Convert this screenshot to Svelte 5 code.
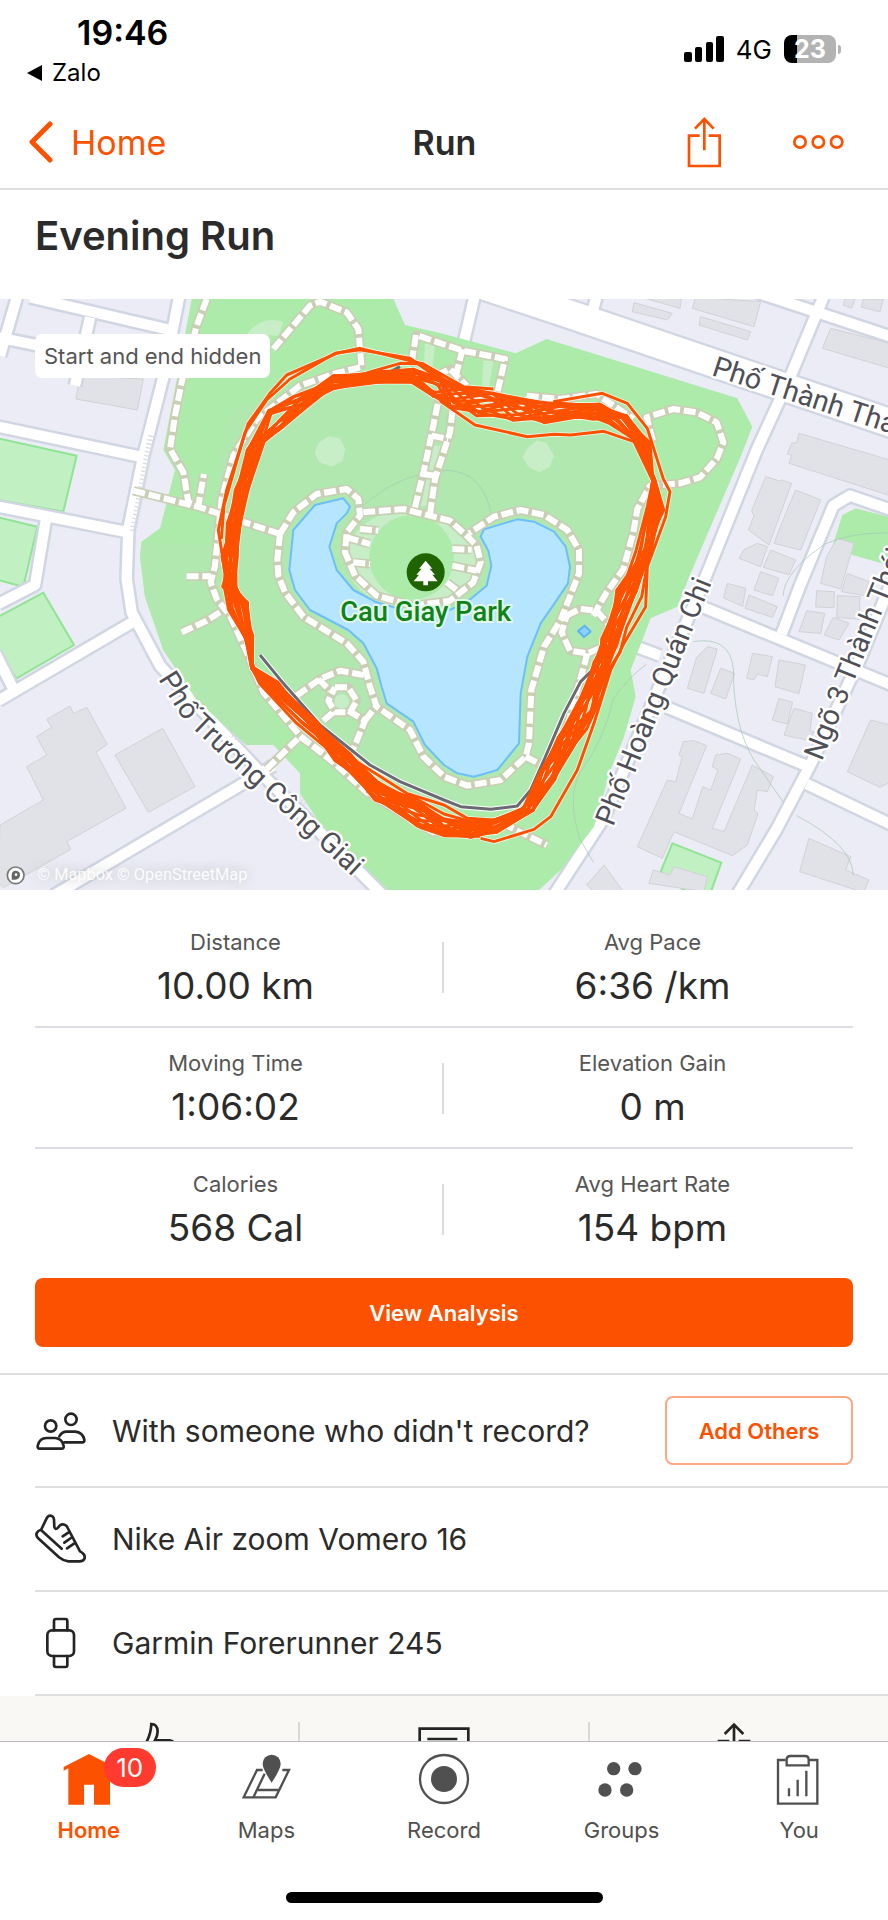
<script lang="ts">
  type Point = [number, number]

  const stats = [
    [
      { label: 'Distance', value: '10.00 km' },
      { label: 'Avg Pace', value: '6:36 /km' },
    ],
    [
      { label: 'Moving Time', value: '1:06:02' },
      { label: 'Elevation Gain', value: '0 m' },
    ],
    [
      { label: 'Calories', value: '568 Cal' },
      { label: 'Avg Heart Rate', value: '154 bpm' },
    ],
  ]

  const park =
    '575,0 1180,0 1215,78 1332,105 1547,163 1640,120 2212,298 2257,383 2222,473 2072,823 2032,923 1952,958 1927,1023 1892,1113 1907,1193 1872,1313 1832,1413 1782,1583 1682,1713 1612,1778 1170,1778 960,1573 900,1483 900,1423 820,1338 740,1338 590,1203 490,1053 435,893 420,773 425,728 480,688 525,513 490,453 530,243'

  const lake =
    '1030,598 1050,623 1040,643 1010,673 988,743 1010,813 1060,873 1130,910 1250,945 1340,937 1400,910 1460,860 1474,800 1465,755 1442,713 1452,691 1552,661 1602,668 1662,698 1697,743 1710,803 1704,853 1667,908 1622,973 1582,1073 1562,1183 1557,1333 1492,1413 1422,1433 1372,1423 1332,1398 1275,1338 1240,1268 1160,1213 1145,1163 1130,1108 1090,1033 1045,993 930,933 885,873 868,813 880,693 945,618'

  const pitches = [
    '-5,418 230,470 190,638 -5,603',
    '-5,655 112,683 70,863 -5,843',
    '-5,953 130,881 222,1038 50,1138 -5,1063',
    '2017,1633 2164,1691 2132,1780 2060,1780 1982,1718',
  ]

  const buildings = [
    '240,230 430,240 412,333 228,300',
    '507,773 547,773 547,880 507,880',
    '0,1578 130,1503 80,1403 140,1368 110,1313 155,1285 140,1261 210,1221 220,1243 260,1225 322,1336 288,1360 378,1528 200,1628 212,1651 10,1766 -5,1750',
    '345,1368 488,1288 585,1463 445,1540',
    '1902,11 2017,43 2002,63 1897,38',
    '1942,0 2045,-5 2040,28',
    '2087,-5 2282,8 2262,83 2077,28',
    '2102,53 2252,98 2242,123 2097,78',
    '2535,0 2567,-5 2555,28 2530,18',
    '2590,0 2650,0 2640,38 2584,24',
    '2492,88 2670,133 2670,208 2467,148',
    '2397,403 2670,483 2670,590 2367,493 2375,468 2362,465 2375,433 2390,430',
    '2297,533 2340,546 2345,543 2375,553 2307,738 2245,693 2262,650 2255,635',
    '2387,573 2462,603 2402,753 2322,733 2342,680',
    '2272,733 2302,743 2282,803 2217,778 2232,752',
    '2312,753 2387,783 2367,827 2290,805',
    '2282,818 2337,838 2317,890 2262,873',
    '2182,853 2237,868 2228,922 2170,896',
    '2512,718 2562,733 2522,870 2462,853 2480,772',
    '2542,823 2607,848 2595,890 2525,878',
    '2450,875 2503,878 2502,926 2447,924',
    '2112,1053 2122,1043 2152,1050 2112,1183 2062,1168 2090,1075',
    '2162,1108 2204,1123 2177,1200 2132,1183',
    '2258,1063 2317,1073 2302,1133 2272,1125 2262,1142 2240,1138',
    '2337,1083 2416,1098 2397,1184 2325,1163',
    '2337,1198 2378,1210 2362,1275 2317,1263',
    '2382,1228 2437,1243 2430,1295 2442,1298 2427,1325 2352,1308',
    '2247,888 2332,923 2317,955 2235,928',
    '2420,935 2474,943 2462,1003 2397,998',
    '2500,955 2547,973 2517,1023 2472,1008',
    '2512,890 2580,893 2577,961 2510,955',
    '2050,1328 2082,1325 2120,1340 2037,1543 2077,1560 2108,1463 2132,1473 2154,1413 2137,1403 2147,1368 2182,1363 2222,1380 2137,1588 2172,1598 2257,1398 2320,1433 2302,1478 2272,1473 2262,1533 2274,1543 2242,1638 2197,1670 2022,1598 1987,1678 1912,1643 2002,1443 2027,1448 2047,1373 2037,1368',
    '1960,1713 2010,1728 2022,1703 2122,1733 2112,1778 1947,1753',
    '2612,1263 2670,1278 2670,1450 2640,1465 2542,1418',
    '2427,1618 2552,1673 2537,1713 2607,1743 2590,1780 2399,1718',
    '1812,1698 1872,1780 1785,1780 1760,1758',
  ]

  const roads = [
    'M90,-5 L520,95',
    'M55,-20 L0,170',
    'M-5,115 L240,165',
    'M540,-20 L490,235 L430,470 L385,690 L380,840 L395,940 L480,1100 L790,1430 L1150,1790',
    'M270,55 L225,260',
    'M-5,383 L430,475',
    'M-5,623 L385,700',
    'M138,660 L105,858 L-5,915',
    'M400,968 L-5,1205',
    'M-15,1060 L40,1170',
    'M160,1790 L820,1400',
    'M2270,-20 L2680,115',
    'M2480,-30 L2370,235 L2270,453 L2110,850 L1810,1560 L1660,1790',
    'M2110,925 L2680,1160',
    'M2000,1225 L2430,1405',
    'M2420,1455 L2680,1580',
    'M2680,635 L2550,590 L2500,620 L2400,860 L2345,1005',
    'M2210,1790 L2330,1590 L2430,1400 L2580,1080 L2670,860',
    'M1424,-10 L1388,145',
    'M1790,-10 L1775,50',
    'M1860,1025 L1980,1070',
  ]

  const paths = [
    'M620,0 L590,80 L545,250 L525,350 L510,450 L550,520 L565,610 L595,620 L612,525',
    'M400,575 L600,625 L840,705',
    'M820,150 L930,20 L960,8 L1040,40 L1075,90 L1085,210',
    'M840,705 L832,780 L835,830 L855,880 L910,953 L1040,1033 L1090,1088 L1110,1163 L1130,1223 L1230,1293 L1270,1373 L1332,1433 L1402,1460 L1502,1443 L1577,1373 L1587,1333 L1594,1173 L1632,1043 L1682,963 L1715,880 L1737,823 L1737,753 L1702,693 L1632,648 L1562,633 L1482,653 L1407,703',
    'M840,705 L880,640 L950,585 L1040,570 L1075,600 L1080,650 L1040,700 L1035,760 L1065,830 L1130,890 L1240,920 L1350,905 L1420,850 L1442,790 L1430,740 L1400,710 L1350,665 L1210,630 L1090,640',
    'M1080,690 L1135,695 M1040,715 L1110,735 M1060,790 L1110,795 M1357,750 L1415,752 M1357,800 L1430,815 M1340,850 L1380,880',
    'M1080,205 L1000,225 L900,260 L770,360 L700,470 L665,600 L645,800 L632,850 L650,900 L690,950 L740,1060 L790,1180 L900,1310 L1000,1390 L1100,1480 L1300,1600 L1500,1570 L1640,1638',
    'M1780,950 L1820,880 L1870,810 L1900,700 L1912,630 L1950,560 L2040,553 L2100,535 L2150,480 L2170,430 L2150,370 L2090,340 L2020,330 L1940,355 L1960,430',
    'M1580,290 L1680,300 L1790,285 L1900,360',
    'M1700,950 L1740,930 L1790,935 L1825,975 L1820,1040 L1762,1063 L1710,1055 L1685,1000 L1700,950',
    'M1762,1063 L1705,1270 L1665,1370 L1602,1490',
    'M1577,1373 L1625,1398',
    'M890,1190 L960,1140 L1020,1115 L1100,1130 M955,1140 L990,1175 M970,1265 L1005,1235 M1045,1235 L1095,1265 L1060,1350 M1095,1265 L1130,1220',
    'M1005,1165 L1045,1165 L1070,1205 L1050,1240 L1005,1240 L985,1205 L1005,1165',
    'M545,1000 L620,965 L690,920 M560,832 L632,832',
    'M800,1410 L900,1313 L1000,1383',
    'M1245,625 L1275,500 L1310,330 L1330,230 M1290,645 L1305,540 L1350,400 L1370,220 L1388,150 M1270,525 L1305,530 M1295,410 L1345,420',
    'M1235,190 L1248,108 L1388,155 L1515,180 L1490,290 M1310,230 L1350,210 L1400,260',
  ]

  // Outer and inner edge of the band the laps run in, clockwise from the north
  const band: [Point, Point][] = [
    [[1140, 217], [1140, 250]],
    [[1000, 230], [1000, 270]],
    [[880, 287], [905, 342]],
    [[805, 335], [850, 382]],
    [[742, 453], [793, 427]],
    [[706, 573], [744, 573]],
    [[682, 673], [722, 673]],
    [[666, 773], [712, 773]],
    [[668, 863], [708, 863]],
    [[685, 933], [742, 910]],
    [[736, 1018], [762, 1008]],
    [[755, 1108], [792, 1083]],
    [[780, 1155], [838, 1148]],
    [[880, 1270], [950, 1268]],
    [[1005, 1385], [1050, 1365]],
    [[1125, 1503], [1135, 1450]],
    [[1250, 1580], [1270, 1520]],
    [[1332, 1608], [1332, 1560]],
    [[1412, 1615], [1412, 1568]],
    [[1490, 1600], [1480, 1563]],
    [[1612, 1535], [1555, 1528]],
    [[1665, 1440], [1620, 1420]],
    [[1722, 1340], [1675, 1315]],
    [[1778, 1240], [1730, 1215]],
    [[1825, 1100], [1782, 1090]],
    [[1850, 1040], [1805, 1020]],
    [[1910, 873], [1850, 873]],
    [[1950, 773], [1903, 753]],
    [[1993, 633], [1942, 623]],
    [[1998, 543], [1958, 543]],
    [[1962, 433], [1905, 423]],
    [[1880, 350], [1825, 372]],
    [[1800, 315], [1780, 362]],
    [[1682, 313], [1632, 372]],
    [[1572, 300], [1540, 364]],
    [[1480, 282], [1430, 350]],
    [[1390, 265], [1350, 325]],
    [[1325, 240], [1300, 292]],
    [[1240, 207], [1235, 254]],
  ]

  const lapPoints = (lap: number) =>
    band
      .map(([outer, inner], i) => {
        const t = 0.5 + 0.5 * Math.sin(lap * 2.4 + i * (0.5 + (lap % 5) * 0.35))
        return `${Math.round(outer[0] + (inner[0] - outer[0]) * t)},${Math.round(outer[1] + (inner[1] - outer[1]) * t)}`
      })
      .join(' ')

  const laps = Array.from({ length: 15 }, (_, i) => 'M' + lapPoints(i) + 'Z')

  const strays = [
    'M1400,275 L1330,240 L1270,195 L1080,148 L1010,163 L860,228 L810,283 L745,373 L680,573 L655,693 L675,820',
    'M1460,295 L1332,250 L1230,178 L1080,152 L1005,163 L870,240 L800,303 L735,400 L672,620 L664,720',
    'M1480,270 L1390,263 L1270,195 L1200,193 L1100,222',
    'M1320,305 L1425,378 L1582,413 L1662,406 L1712,408 L1812,397 L1902,428 L1958,545 L1948,640 L1936,780',
    'M1660,308 L1807,283 L1882,313 L1942,388 L1990,540 L2010,578 L1997,653 L1942,803 L1937,923 L1872,1033 L1832,1113 L1782,1273 L1732,1413 L1652,1553 L1602,1591 L1482,1628 L1442,1618',
    'M1945,780 L1925,893 L1880,985 L1860,1060 L1825,1115 L1805,1190 L1760,1290 L1720,1340',
    'M1030,1363 L1110,1413 L1220,1483 L1332,1518 L1402,1558 L1482,1563',
    'M1030,1365 L1120,1460 L1250,1500 L1332,1545 L1420,1570',
    'M1100,1475 L1180,1530 L1260,1585 L1332,1610 L1440,1612',
  ]

  const hidden =
    'M780,1068 L850,1153 L960,1278 L1110,1398 L1200,1448 L1332,1503 L1382,1523 L1472,1531 L1552,1521 L1592,1473 L1632,1383 L1692,1243 L1742,1148 L1792,1098'
</script>

<div class="app">
  <header>
    <div class="status">
      <div class="status-left">
        <span class="time">19:46</span>
        <a class="return" href="#zalo">
          <svg viewBox="0 0 16 16" aria-hidden="true"><path d="M0 8 15 0v16z" /></svg>
          Zalo
        </a>
      </div>
      <div class="status-right">
        <svg class="signal" viewBox="0 0 40 26" aria-hidden="true">
          <rect x="0" y="16" width="8" height="10" rx="2" />
          <rect x="11" y="11" width="7" height="15" rx="2" />
          <rect x="22" y="6" width="7" height="20" rx="2" />
          <rect x="32" y="0" width="8" height="26" rx="2" />
        </svg>
        <span class="network">4G</span>
        <span class="battery">23</span>
      </div>
    </div>
    <nav class="topbar">
      <a class="back" href="#home">
        <svg viewBox="0 0 24 42" aria-hidden="true"><path d="M21 3 3 21l18 18" /></svg>
        Home
      </a>
      <span class="title">Run</span>
      <div class="actions">
        <button aria-label="Share">
          <svg class="share" viewBox="0 0 105 156">
            <path d="M38 59H6v91h92V59H65M52 103V9M24 38 52 9l28 29" />
          </svg>
        </button>
        <button aria-label="More">
          <svg class="more" viewBox="0 0 156 48">
            <circle cx="24" cy="24" r="17" />
            <circle cx="79" cy="24" r="17" />
            <circle cx="134" cy="24" r="17" />
          </svg>
        </button>
      </div>
    </nav>
  </header>

  <main>
    <h1>Evening Run</h1>

    <div class="map">
      <svg viewBox="0 0 2664 1773" role="img" aria-label="Route map">
        <rect class="land" width="2664" height="1773" />
        {#each pitches as points}
          <polygon class="pitch" {points} />
        {/each}
        <polygon class="park" points="2527,648 2567,628 2670,655 2670,800 2557,768 2497,743" />
        {#each buildings as points}
          <polygon class="building" {points} />
        {/each}

        <path class="main-casing" d="M1300,-90 L1700,43 L2290,243 L2680,375" />
        {#each roads as d}
          <path class="road-casing" {d} />
        {/each}
        <path class="main-road" d="M1300,-90 L1700,43 L2290,243 L2680,375" />
        {#each roads as d}
          <path class="road" {d} />
        {/each}
        <path class="steps" d="M455,410 L400,700" />
        <path class="steps" d="M700,1305 L745,1340 M900,1490 L925,1515" />

        <polygon class="park" points={park} />
        <polygon class="meadow" points="620,690 690,330 1000,250 1290,280 1400,360 1880,390 1930,560 1850,880 1600,1480 1350,1540 1100,1420 780,1080 680,850" />
        <polygon class="meadow" points="420,773 425,728 640,740 640,880 780,1130 820,1338 740,1338 590,1203 490,1053 435,893" />
        <polygon class="clearing" points="955,433 985,412 1020,418 1036,450 1028,485 995,503 958,490 944,462" />
        <polygon class="clearing" points="1580,450 1610,424 1640,432 1662,470 1648,505 1618,520 1586,505 1568,475" />
        <path class="clearing" d="M740,105 Q790,45 850,70 L835,110Z" />
        <path class="clearing" d="M1275,135 h30 l-10,90 h-25z M1450,185 h30 l-12,75 h-22z M1300,440 h30 l-35,180 h-32z" />
        <path class="trail" d="M1090,620 Q1200,520 1345,514 Q1450,520 1475,650" />
        <path class="trail" d="M1780,1690 L1740,1620 Q1700,1500 1740,1420 Q1810,1330 1840,1200 Q1880,1140 1940,1095" />
        <path class="trail" d="M2080,1028 Q2190,1010 2200,1110 Q2200,1280 2260,1380 L2350,1510 M2390,1550 Q2560,1640 2560,1730" />
        <path class="trail" d="M2475,735 Q2350,820 2350,890 M2475,735 Q2550,700 2664,702" />
        <ellipse class="terrace" cx="1238" cy="780" rx="200" ry="150" />
        <circle class="stage" cx="1235" cy="775" r="127" />
        <polygon class="lake" points={lake} />

        {#each paths as d}
          <path class="path-casing" {d} />
        {/each}
        {#each paths as d}
          <path class="path" {d} />
        {/each}
        <circle class="clearing" cx="1025" cy="1208" r="22" />
        <path class="pond" d="M1754,980 l18,18 -20,16 -18,-18z" />

        <text class="street" transform="translate(2132 228) rotate(18)">Phố Thành Thái</text>
        <text class="street" transform="translate(1839 1585) rotate(-68)">Phố Hoàng Quán Chi</text>
        <text class="street" transform="translate(2465 1388) rotate(-68)">Ngõ 3 Thành Thái</text>
        <path id="street-curve" d="M474,1140 L550,1262 L700,1405 L840,1532 L1120,1790" fill="none" />
        <text class="street"><textPath href="#street-curve">Phố Trương Công Giai</textPath></text>

        <path class="hidden-casing" d={hidden} />
        {#each laps as d}
          <path class="lap-casing" {d} />
        {/each}
        {#each strays as d}
          <path class="lap-casing" {d} />
        {/each}
        <path class="hidden" d={hidden} />
        <path class="hidden" d="M840,365 L895,318 M1165,222 L1200,203" />
        {#each laps as d}
          <path class="lap" {d} />
        {/each}
        {#each strays as d}
          <path class="lap" {d} />
        {/each}

        <circle class="marker" cx="1277" cy="820" r="57" />
        <path class="tree" d="M1277,785 l20,24 h-8 l16,18 h-8 l16,20 h-29 v12 h-14 v-12 h-29 l16,-20 h-8 l16,-18 h-8z" />
        <text class="place" x="1277" y="966">Cau Giay Park</text>

        <circle class="logo-ring" cx="47" cy="1729" r="25" />
        <path class="logo" d="M35,1742 v-14 q0,-13 13,-13 q12,1 12,13 q-1,13 -14,14z" />
        <circle class="logo-dot" cx="48" cy="1727" r="4" />
        <text class="credit" x="112" y="1744">© Mapbox © OpenStreetMap</text>
      </svg>
      <span class="chip">Start and end hidden</span>
    </div>

    <section class="stats">
      {#each stats as row}
        <div class="stat-row">
          {#each row as stat}
            <div class="stat">
              <span class="label">{stat.label}</span>
              <span class="value">{stat.value}</span>
            </div>
          {/each}
        </div>
      {/each}
      <button class="analysis">View Analysis</button>
    </section>

    <ul class="details">
      <li class="tall">
        <svg viewBox="0 0 156 156" aria-hidden="true">
          <circle cx="47" cy="63" r="17" />
          <circle cx="108" cy="43" r="17" />
          <path d="M14 131q-7 0-6-8 5-24 27-24h26q21 2 25 24 1 8-6 8z" />
          <path d="M73 94q8-14 22-14h26q22 2 27 24 1 8-6 8H88" />
        </svg>
        <span>With someone who didn't record?</span>
        <button class="add">Add Others</button>
      </li>
      <li>
        <svg viewBox="0 0 156 156" aria-hidden="true">
          <path d="M18 51 36 14Q43 5 52 10q5 4 5 10l1 22q3 11 11 2 11-17 26-5l40 76q18 9 13 23-4 7-14 7h-34q-16-2-28-12L8 74Q0 64 9 55q4-4 9-4l62 56" />
          <path d="M101 58 83 70M108 75 88 89M117 92l-21 14" />
        </svg>
        <span>Nike Air zoom Vomero 16</span>
      </li>
      <li>
        <svg viewBox="0 0 156 156" aria-hidden="true">
          <rect x="37" y="40" width="80" height="77" rx="14" />
          <path d="M57 40V12q0-6 6-6h28q6 0 6 6v28M57 117v27q0 6 6 6h28q6 0 6-6v-27" />
        </svg>
        <span>Garmin Forerunner 245</span>
      </li>
    </ul>

    <div class="social">
      <button aria-label="Give kudos">
        <svg viewBox="0 0 156 156">
          <path d="M46 75Q68 45 70 6q18 0 19 22 0 14-8 27h44q14 2 16 16M46 75v60h80l17-66" />
        </svg>
      </button>
      <button aria-label="Comment">
        <svg viewBox="0 0 156 156">
          <path d="M5 20h146v96H70l-30 30v-30H5zM28 51h90M28 80h90" />
        </svg>
      </button>
      <button aria-label="Share activity">
        <svg viewBox="0 0 156 156">
          <path d="M64 57H33v90h90V57H92M78 105V8M50 36 78 8l28 28" />
        </svg>
      </button>
    </div>
  </main>

  <footer>
    <nav class="tabs">
      <a class="active" href="#home">
        <span class="tab-icon">
          <svg viewBox="0 0 156 156" aria-hidden="true">
            <path class="solid" d="M2 42 78 3l76 39v11l-13-6v108H93V95H63v60H16V46L2 53z" />
          </svg>
          <span class="badge">10</span>
        </span>
        Home
      </a>
      <a href="#maps">
        <svg viewBox="0 0 156 156" aria-hidden="true">
          <path d="M68 51H51L11 133h96l40-82h-20M74 62 41 131M54 111h63" />
          <path class="solid" d="M95 89Q68 48 68 32a27 27 0 0 1 54 0q0 16-27 57z" />
        </svg>
        Maps
      </a>
      <a href="#record">
        <svg viewBox="0 0 156 156" aria-hidden="true">
          <circle cx="78" cy="78" r="72" />
          <circle class="solid" cx="78" cy="78" r="39" />
        </svg>
        Record
      </a>
      <a href="#groups">
        <svg viewBox="0 0 156 156" aria-hidden="true">
          <circle class="solid" cx="53" cy="47" r="20" />
          <circle class="solid" cx="117" cy="47" r="20" />
          <circle class="solid" cx="27" cy="111" r="20" />
          <circle class="solid" cx="92" cy="111" r="20" />
        </svg>
        Groups
      </a>
      <a href="#you">
        <svg viewBox="0 0 156 156" aria-hidden="true">
          <path d="M38 21H15v131h118V21h-26M48 106v24M74 80v50M100 53v77" />
          <path d="M41 37V20q0-11 11-11h44q11 0 11 11v17z" />
        </svg>
        You
      </a>
    </nav>
    <div class="indicator"></div>
  </footer>
</div>

<style>
  :global(body) {
    margin: 0;
    background: #fff;
  }
  .app {
    height: 100vh;
    display: flex;
    flex-direction: column;
    font-family: Inter, 'Liberation Sans', sans-serif;
    color: #2b2b2b;
  }
  a {
    color: inherit;
    text-decoration: none;
  }
  button {
    font: inherit;
    color: inherit;
    background: none;
    border: 0;
    padding: 0;
    cursor: pointer;
  }
  svg {
    display: block;
    flex: none;
  }

  .status {
    height: 96px;
    box-sizing: border-box;
    padding: 0 52px 0 27px;
    display: flex;
    justify-content: space-between;
    color: #000;
  }
  .status-left {
    display: flex;
    flex-direction: column;
    padding-top: 12px;
  }
  .time {
    padding-left: 50px;
    font-size: 34px;
    line-height: 42px;
    font-weight: 600;
  }
  .return {
    display: flex;
    align-items: center;
    gap: 9px;
    font-size: 24px;
    line-height: 38px;
  }
  .return svg {
    width: 16px;
  }
  .status-right {
    display: flex;
    align-items: center;
    gap: 12px;
    padding-top: 2px;
  }
  .signal {
    width: 40px;
  }
  .network {
    font-size: 26px;
  }
  .battery {
    position: relative;
    width: 52px;
    height: 28px;
    border-radius: 8px;
    background: linear-gradient(to right, #000 13px, #b3b3b3 13px);
    color: #fff;
    font-size: 25px;
    line-height: 28px;
    font-weight: 700;
    text-align: center;
  }
  .battery::after {
    content: '';
    position: absolute;
    right: -5px;
    top: 10px;
    width: 3px;
    height: 9px;
    border-radius: 0 3px 3px 0;
    background: #b3b3b3;
  }

  .topbar {
    height: 92px;
    border-bottom: 2px solid #dfdfdf;
    padding: 0 44px 0 29px;
    display: grid;
    grid-template-columns: 1fr auto 1fr;
    align-items: center;
    font-size: 34px;
  }
  .back {
    display: flex;
    align-items: center;
    gap: 18px;
    color: #fc5200;
  }
  .back svg {
    width: 24px;
    fill: none;
    stroke: #fc5200;
    stroke-width: 5;
    stroke-linecap: round;
    stroke-linejoin: round;
  }
  .title {
    padding-left: 16px;
    font-weight: 600;
  }
  .actions {
    display: flex;
    align-items: center;
    justify-content: flex-end;
    gap: 70px;
  }
  .actions svg {
    fill: none;
    stroke: #fc5200;
    stroke-width: 8;
  }
  .share {
    width: 35px;
  }
  .more {
    width: 52px;
  }

  main {
    flex: 1;
    min-height: 0;
    overflow-y: auto;
    scrollbar-width: none;
  }
  h1 {
    margin: 0;
    padding: 21px 35px 38px;
    font-size: 40px;
    line-height: 50px;
    font-weight: 600;
  }

  .map {
    position: relative;
  }
  .map svg {
    width: 100%;
    height: auto;
  }
  .map path,
  .map polygon {
    stroke-linejoin: round;
  }
  .chip {
    position: absolute;
    left: 35px;
    top: 35px;
    padding: 0 9px;
    border-radius: 7px;
    background: #fff;
    color: #555;
    font-size: 22px;
    line-height: 44px;
  }
  .land {
    fill: #ebecf5;
  }
  .park,
  .stage {
    fill: #adebab;
  }
  .meadow {
    fill: #b0e8b0;
  }
  .clearing,
  .terrace {
    fill: #c8eec8;
  }
  .pitch {
    fill: #c1f0c2;
    stroke: #90e494;
    stroke-width: 6;
  }
  .building {
    fill: #e1e2e7;
    stroke: #d2d2d6;
    stroke-width: 3;
  }
  .lake {
    fill: #b6e5ff;
    stroke: #6cbffc;
    stroke-width: 6;
  }
  .pond {
    fill: #8dd0fb;
    stroke: #5eb3f6;
    stroke-width: 6;
  }
  .road-casing,
  .main-casing,
  .road,
  .main-road,
  .steps,
  .trail,
  .path,
  .path-casing,
  .lap,
  .lap-casing,
  .hidden,
  .hidden-casing {
    fill: none;
  }
  .road-casing {
    stroke: #d0d6e2;
    stroke-width: 46;
  }
  .main-casing {
    stroke: #d0d6e2;
    stroke-width: 96;
  }
  .road {
    stroke: #fff;
    stroke-width: 31;
  }
  .main-road {
    stroke: #fff;
    stroke-width: 82;
  }
  .steps {
    stroke: #dadce4;
    stroke-width: 22;
    stroke-dasharray: 4 8;
  }
  .trail {
    stroke: #a5c9b4;
    stroke-width: 3;
    stroke-opacity: 0.7;
  }
  .path-casing {
    stroke: #c9cfb4;
    stroke-width: 28;
  }
  .path {
    stroke: #fff;
    stroke-width: 18;
    stroke-dasharray: 36 11;
  }
  .hidden-casing {
    stroke: #fff;
    stroke-width: 15;
  }
  .hidden {
    stroke: #6a6a72;
    stroke-width: 9;
  }
  .lap-casing {
    stroke: #fff;
    stroke-opacity: 0.7;
    stroke-width: 14;
  }
  .lap {
    stroke: #fc5200;
    stroke-width: 9;
  }
  .street,
  .place,
  .credit {
    font-family: Roboto, 'Noto Sans', sans-serif;
  }
  .street {
    fill: #4f4f58;
    stroke: #fff;
    stroke-width: 14;
    stroke-linejoin: round;
    paint-order: stroke;
    font-size: 86px;
  }
  .place {
    fill: #0c8418;
    stroke: #e4f7ec;
    stroke-width: 12;
    stroke-linejoin: round;
    paint-order: stroke;
    font-size: 82px;
    font-weight: 500;
    text-anchor: middle;
  }
  .marker {
    fill: #1f6400;
  }
  .tree {
    fill: #fff;
  }
  .logo-ring {
    fill: #fff;
    stroke: #777;
    stroke-width: 5;
  }
  .logo {
    fill: #666;
  }
  .logo-dot {
    fill: #fff;
  }
  .credit {
    fill: #fff;
    fill-opacity: 0.9;
    font-size: 49px;
    text-shadow: 0 0 12px #bbb;
  }

  .stats {
    padding: 17px 35px 26px;
  }
  .stat-row {
    display: flex;
    padding: 19px 0 18px;
    border-bottom: 2px solid #dcdce4;
  }
  .stat-row:nth-child(3) {
    border-bottom: 0;
  }
  .stat {
    flex: 1;
    display: flex;
    flex-direction: column;
    align-items: center;
    gap: 6px;
  }
  .stat:first-child {
    padding-right: 8px;
    background: linear-gradient(#dddde0, #dddde0) right 16px / 2px 51px no-repeat;
  }
  .stat:last-child {
    padding-left: 8px;
  }
  .label {
    color: #555;
    font-size: 22px;
    line-height: 32px;
  }
  .value {
    font-size: 37px;
    line-height: 44px;
  }
  .analysis {
    width: 100%;
    height: 69px;
    margin-top: 10px;
    display: block;
    border-radius: 8px;
    background: #fc5200;
    color: #fff;
    font-size: 22px;
    font-weight: 600;
  }

  .details {
    margin: 0;
    padding: 0 0 0 35px;
    list-style: none;
    border-top: 2px solid #dfdfdf;
  }
  .details li {
    height: 102px;
    display: flex;
    align-items: center;
    gap: 25px;
    padding-right: 35px;
    border-bottom: 2px solid #e0e0e0;
    font-size: 30px;
  }
  .details .tall {
    height: 111px;
  }
  .details svg {
    width: 52px;
    fill: none;
    stroke: #242424;
    stroke-width: 8;
    stroke-linecap: round;
    stroke-linejoin: round;
  }
  .add {
    box-sizing: border-box;
    width: 188px;
    height: 69px;
    margin-left: auto;
    border: 2px solid #fda882;
    border-radius: 8px;
    color: #fc5200;
    font-size: 22px;
    font-weight: 600;
  }

  .social {
    display: flex;
    padding: 26px 10px;
    background: #f9f8f5;
  }
  .social button {
    flex: 1;
    display: flex;
    justify-content: center;
  }
  .social button + button {
    border-left: 2px solid #dad9d7;
  }
  .social svg {
    width: 52px;
    fill: none;
    stroke: #242424;
    stroke-width: 8;
  }

  footer {
    height: 178px;
    border-top: 1px solid #bbb;
    background: #fff;
    display: flex;
    flex-direction: column;
    justify-content: space-between;
    align-items: center;
  }
  .tabs {
    width: 100%;
    display: flex;
    padding-top: 11px;
  }
  .tabs a {
    flex: 1;
    display: flex;
    flex-direction: column;
    align-items: center;
    gap: 9px;
    color: #505050;
    font-size: 22px;
    line-height: 32px;
  }
  .tabs a.active {
    color: #fc5200;
    font-weight: 600;
  }
  .tabs svg {
    width: 52px;
    fill: none;
    stroke: currentColor;
    stroke-width: 7;
  }
  .tabs .solid {
    fill: currentColor;
    stroke: none;
  }
  .tab-icon {
    position: relative;
  }
  .badge {
    position: absolute;
    left: 41px;
    top: -5px;
    width: 52px;
    height: 39px;
    border-radius: 20px;
    background: #ff3b30;
    color: #fff;
    font-size: 26px;
    line-height: 39px;
    font-weight: 400;
    text-align: center;
  }
  .indicator {
    width: 317px;
    height: 11px;
    margin-bottom: 17px;
    border-radius: 6px;
    background: #000;
  }
</style>
